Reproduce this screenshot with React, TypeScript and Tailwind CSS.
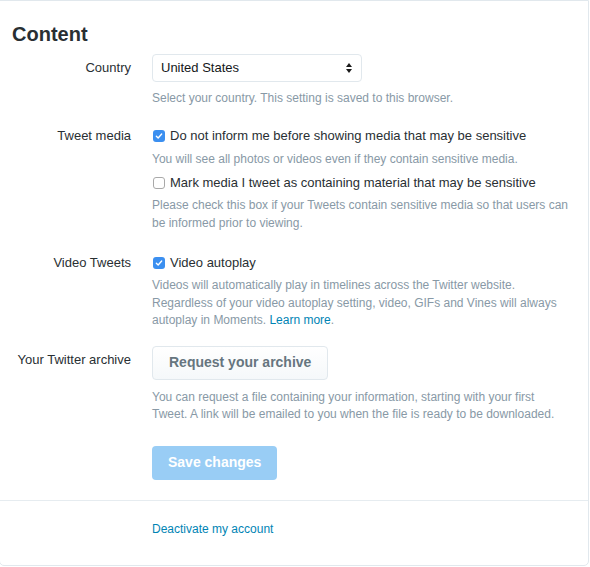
import React from 'react';

// Settings panel – "Content" section

function Box({ checked }: { checked: boolean }) {
  return checked ? (
    <span className="flex h-[12px] w-[12px] shrink-0 items-center justify-center rounded-[3px] bg-[#3b8ff0]">
      <svg viewBox="0 0 12 12" className="h-[10px] w-[10px]">
        <path d="M2.8 6.2 L5 8.4 L9.2 3.6" fill="none" stroke="#fff" strokeWidth="1.6" strokeLinecap="round" strokeLinejoin="round" />
      </svg>
    </span>
  ) : (
    <span className="h-[12px] w-[12px] shrink-0 rounded-[3px] border border-[#a9a9a9] bg-white" />
  );
}

function Check({ checked, label }: { checked: boolean; label: string }) {
  return (
    <div className="flex items-center gap-[5px] pl-px text-[13px] leading-[18px] text-[#292f33]">
      <Box checked={checked} />
      <span>{label}</span>
    </div>
  );
}

function Help({ children, className = '' }: { children: React.ReactNode; className?: string }) {
  return <p className={`text-[12px] leading-[17.5px] text-[#8899a6] ${className}`}>{children}</p>;
}

export default function App() {
  return (
    <div className="h-[567px] w-[590px] overflow-hidden bg-white font-['Liberation_Sans',Arial,sans-serif]">
      <div className="-ml-px w-[590px] rounded-b-[5px] border border-[#e1e8ed] bg-white">
        <div className="pb-[20px] pt-[21px]">
          <h2 className="pl-[12px] text-[20px] font-bold leading-[24px] text-[#292f33]">Content</h2>

          {/* Country */}
          <div className="mt-[8px] flex">
            <div className="w-[132px] shrink-0 pr-px text-right text-[13px] leading-[28px] text-[#292f33]">Country</div>
            <div className="ml-[20px] flex-1">
              <div className="flex h-[28px] w-[210px] items-center justify-between rounded-[4px] border border-[#e1e8ed] bg-white pl-[8px] pr-[8px] text-[13px] text-[#14171a]">
                <span>United States</span>
                <svg viewBox="0 0 8 12" className="h-[12px] w-[8px]">
                  <path d="M4 1 L7 5 L1 5 Z" fill="#1a1a1a" />
                  <path d="M4 11 L7 7 L1 7 Z" fill="#1a1a1a" />
                </svg>
              </div>
              <Help className="mt-[7px] leading-[18px]">Select your country. This setting is saved to this browser.</Help>
            </div>
          </div>

          {/* Tweet media */}
          <div className="mt-[20px] flex">
            <div className="w-[132px] shrink-0 pr-px text-right text-[13px] leading-[18px] text-[#292f33]">Tweet media</div>
            <div className="ml-[20px] flex-1 pr-[16px]">
              <Check checked label="Do not inform me before showing media that may be sensitive" />
              <Help className="mt-[5px] leading-[18px]">You will see all photos or videos even if they contain sensitive media.</Help>
              <div className="mt-[6px]">
                <Check checked={false} label="Mark media I tweet as containing material that may be sensitive" />
              </div>
              <Help className="mt-[5px]">
                Please check this box if your Tweets contain sensitive media so that users can be informed prior to viewing.
              </Help>
            </div>
          </div>

          {/* Video Tweets */}
          <div className="mt-[22px] flex">
            <div className="w-[132px] shrink-0 pr-px text-right text-[13px] leading-[18px] text-[#292f33]">Video Tweets</div>
            <div className="ml-[20px] flex-1 pr-[16px]">
              <Check checked label="Video autoplay" />
              <Help className="mt-[5px]">
                Videos will automatically play in timelines across the Twitter website. Regardless of your video autoplay
                setting, video, GIFs and Vines will always autoplay in Moments.{' '}
                <span className="text-[#0084b4]">Learn more</span>.
              </Help>
            </div>
          </div>

          {/* Archive */}
          <div className="mt-[16px] flex">
            <div className="w-[132px] shrink-0 pr-px pt-[5px] text-right text-[13px] leading-[18px] text-[#292f33]">
              Your Twitter archive
            </div>
            <div className="ml-[20px] flex-1 pr-[16px]">
              <button className="h-[34px] rounded-[4px] border border-[#e1e8ed] bg-gradient-to-b from-white to-[#f5f8fa] px-[16px] text-[14px] font-bold text-[#66757f]">
                Request your archive
              </button>
              <Help className="mt-[9px]">
                You can request a file containing your information, starting with your first Tweet. A link will be emailed to
                you when the file is ready to be downloaded.
              </Help>
              <button className="mt-[22px] h-[34px] rounded-[4px] bg-[#99cdf5] px-[16px] text-[14px] font-bold text-white">
                Save changes
              </button>
            </div>
          </div>
        </div>

        <div className="border-t border-[#e6ecf0] pb-[27px] pl-[152px] pt-[19px] text-[12px] leading-[18px]">
          <a className="text-[#0084b4]">Deactivate my account</a>
        </div>
      </div>
    </div>
  );
}
